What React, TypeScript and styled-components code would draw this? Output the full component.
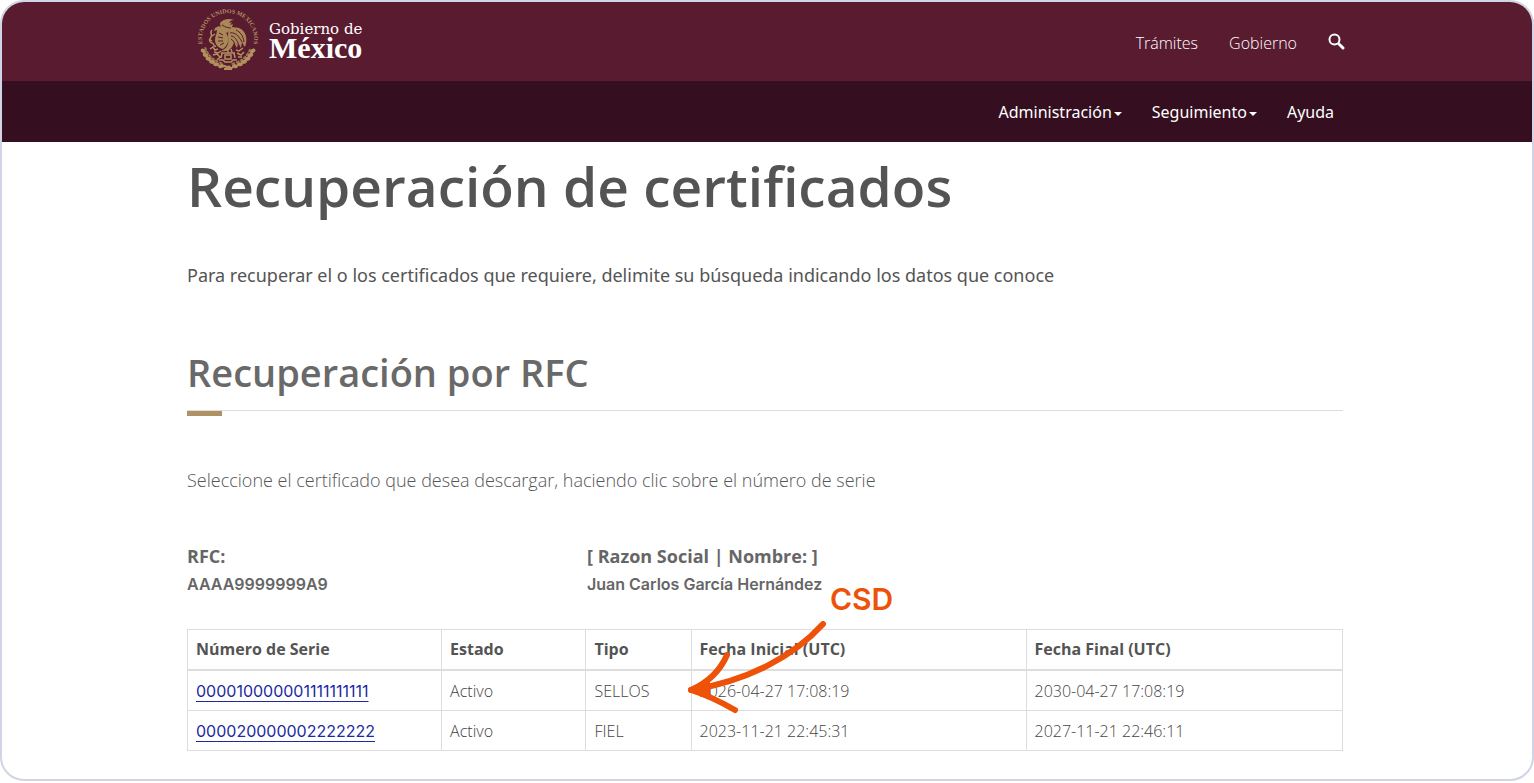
import React from "react";
import styled, { createGlobalStyle } from "styled-components";

const GlobalStyle = createGlobalStyle`
  *, *::before, *::after { box-sizing: border-box; }
  body {
    margin: 0;
    background: #fff;
    color: #545454;
    font-family: "Open Sans", sans-serif;
  }
  h1, h2, p, dl, dt, dd, ul { margin: 0; padding: 0; }
`;

const Frame = styled.div`
  border: 2px solid #d0d4e4;
  border-radius: 24px;
  overflow: hidden;
  background: #fff;
`;

const Bar = styled.div<{ $tone: string }>`
  background: ${(p) => p.$tone};
`;

const Container = styled.div`
  max-width: 1160px;
  margin: 0 auto;
  padding-right: 4px;
`;

const TopRow = styled(Container)`
  display: flex;
  align-items: center;
  justify-content: space-between;
  height: 79px;
  padding-left: 10px;
  padding-right: 2px;
`;

const Brand = styled.a`
  display: flex;
  align-items: center;
  gap: 10px;
  padding-bottom: 4px;
  color: #fff;
  text-decoration: none;
`;

const BrandText = styled.span`
  display: flex;
  flex-direction: column;
`;

const BrandSmall = styled.span`
  font-family: "DejaVu Serif", serif;
  font-size: 15px;
  line-height: 16px;
`;

const BrandLarge = styled.span`
  font-family: "Liberation Serif", serif;
  font-size: 30px;
  font-weight: 700;
  line-height: 22px;
`;

const TopNav = styled.nav`
  display: flex;
  align-items: center;
  gap: 31px;
  padding: 3px 0 0;
`;

const TopLink = styled.a`
  color: #fff;
  font-size: 16px;
  font-weight: 300;
  line-height: 24px;
  text-decoration: none;
`;

const SearchButton = styled.button`
  display: flex;
  padding: 0 0 4px;
  border: 0;
  background: none;
  color: #fff;
`;

const MenuRow = styled(Container)`
  display: flex;
  align-items: center;
  justify-content: flex-end;
  gap: 30px;
  height: 61px;
  padding-right: 13px;
`;

const MenuItem = styled.a`
  display: flex;
  align-items: center;
  gap: 2px;
  color: #fff;
  font-family: "Noto Sans", sans-serif;
  font-size: 16px;
  font-weight: 400;
  line-height: 24px;
  text-decoration: none;
`;

const Caret = styled.span`
  margin-top: 4px;
  border: 4px solid transparent;
  border-top-color: #fff;
  border-bottom: 0;
`;

const Main = styled(Container).attrs({ as: "main" })`
  padding-top: 6px;
  padding-bottom: 28px;
`;

const Title = styled.h1`
  font-size: 55px;
  font-weight: 600;
  line-height: 76px;
`;

const Intro = styled.p`
  margin-top: 37px;
  font-family: "Noto Sans", sans-serif;
  font-size: 18px;
  line-height: 28px;
`;

const SectionTitle = styled.h2`
  margin-top: 55px;
  padding-bottom: 10px;
  color: #696969;
  font-size: 38px;
  font-weight: 600;
  line-height: 56px;
`;

const Rule = styled.div`
  height: 6px;
  border-top: 1px solid #ddd;

  &::before {
    content: "";
    display: block;
    width: 35px;
    height: 5px;
    background: #b09163;
  }
`;

const Hint = styled.p`
  margin-top: 50px;
  color: #555;
  font-size: 18px;
  font-weight: 300;
  line-height: 28px;
`;

const Facts = styled.dl`
  display: flex;
  margin-top: 48px;
  color: #666;
`;

const Fact = styled.div`
  flex: 0 0 400px;
`;

const FactLabel = styled.dt`
  font-size: 18px;
  font-weight: 700;
  line-height: 28px;
`;

const FactValue = styled.dd`
  font-family: Inter, sans-serif;
  font-size: 16px;
  font-weight: 600;
  line-height: 28px;
`;

const Results = styled.div`
  position: relative;
  margin-top: 31px;
`;

const Table = styled.table`
  width: 100%;
  border-collapse: collapse;
  table-layout: fixed;
  font-size: 16px;
  line-height: 24px;
`;

const HeadCell = styled.th<{ $width: string }>`
  width: ${(p) => p.$width};
  padding: 7px 8px 8px;
  border: 1px solid #ddd;
  border-bottom-width: 2px;
  text-align: left;
  font-weight: 700;
`;

const Cell = styled.td`
  padding: 8px 8px 7px;
  border: 1px solid #ddd;
  color: #444;
  font-weight: 300;
`;

const SerialLink = styled.a`
  color: #1c2aa0;
  font-family: Inter, sans-serif;
  font-weight: 400;
  text-underline-offset: 4px;
`;

const Callout = styled.div`
  position: absolute;
  top: -48px;
  left: 500px;
  color: #ee5209;
  pointer-events: none;
`;

const CalloutLabel = styled.span`
  display: block;
  padding-left: 143px;
  font-family: Inter, sans-serif;
  font-size: 30px;
  font-weight: 600;
  line-height: 36px;
`;

const Arrow = styled.svg`
  display: block;
  margin-top: 4px;
`;

const SealLetters = styled.text`
  font-family: "Liberation Serif", serif;
  font-size: 6px;
  font-weight: 700;
`;

const columns = [
  { label: "Número de Serie", width: "22%" },
  { label: "Estado", width: "12.5%" },
  { label: "Tipo", width: "9.1%" },
  { label: "Fecha Inicial (UTC)", width: "29%" },
  { label: "Fecha Final (UTC)", width: "27.4%" },
];

const certificates = [
  ["000010000001111111111", "Activo", "SELLOS", "2026-04-27 17:08:19", "2030-04-27 17:08:19"],
  ["000020000002222222", "Activo", "FIEL", "2023-11-21 22:45:31", "2027-11-21 22:46:11"],
];

const leafAngles = [24, 34, 44, 54, 64, 75, 105, 116, 126, 136, 146, 156];

function Seal() {
  return (
    <svg width="62" height="62" viewBox="0 0 62 62" fill="none" stroke="#b3915f" aria-hidden="true">
      <defs>
        <path id="seal-arc" d="M7 40A26 26 0 1 1 55 40" />
      </defs>
      <SealLetters fill="#b3915f" stroke="none">
        <textPath href="#seal-arc" startOffset="50%" textAnchor="middle">
          ESTADOS UNIDOS MEXICANOS
        </textPath>
      </SealLetters>
      {leafAngles.map((angle) => (
        <g key={angle} transform={`rotate(${angle} 31 31)`}>
          <ellipse cx="58" cy="31" rx="2" ry="3" fill="#b3915f" stroke="none" transform={`rotate(${angle < 90 ? 30 : -30} 58 31)`} />
          <ellipse cx="55" cy="32" rx="1" ry="2" fill="#9c7a50" stroke="none" />
        </g>
      ))}
      <path d="M26 58c2-3 4 2 5 0s3 3 5 0M27 60h8" strokeWidth="2" />
      <g fill="#a98757" stroke="none">
        <path d="M23 14c3-4 9-5 14-3-3 0-4 1-5 3l3-1-2 3 3-1-1 3c3 0 5 2 6 4-5-2-9-1-11 2-3-1-7-4-7-10z" />
        <path d="M32 21c5-4 12-3 15 2 3 4 3 10 1 15-2-2-2-4-3-5l-1 6-3-5-1 5-3-5-2 4c-2 3-6 5-11 4 4-2 6-4 7-7 1-5-1-10 1-14z" />
        <path d="M22 17l-4 2-1 3 3-1c0 4-2 6-2 10s3 8 8 9c4-3 6-7 5-12-1-4-5-9-9-11z" />
      </g>
      <path d="M33 24c3-1 8 1 12 9M34 27c3 0 6 3 8 10M34 30c2 1 3 3 4 6M39 21c4 2 7 5 8 12M25 16c3 2 6 3 9 3M22 24l4 2M21 28l5 1M21 32l5 0M23 36l4-2" stroke="#591b30" strokeWidth="1" />
      <path d="M15 21c-3 3 1 4-1 7s-2 5 1 6 1 4 4 3M12 30l3 2M18 25l-3 2M13 40l3-2 2 3 3-1M39 41l3 1 4-3" strokeWidth="1.5" />
      <path d="M17 43l4 1 3-2M16 46l4-1 3 3-3 3M24 44h14M25 44l-1 5M28 46h6v4h-6zM37 44l1 5M22 51l4 0 2 2h6l2-2h4M40 44l4 2 3-3M41 48l4 0M31 40v4M34 40l1 3" strokeWidth="1.5" />
    </svg>
  );
}

export default function App() {
  return (
    <>
      <GlobalStyle />
      <Frame>
        <header>
          <Bar $tone="#591b30">
            <TopRow>
              <Brand href="#inicio">
                <Seal />
                <BrandText>
                  <BrandSmall>Gobierno de</BrandSmall>
                  <BrandLarge>México</BrandLarge>
                </BrandText>
              </Brand>
              <TopNav aria-label="Principal">
                <TopLink href="#tramites">Trámites</TopLink>
                <TopLink href="#gobierno">Gobierno</TopLink>
                <SearchButton type="button" aria-label="Buscar">
                  <svg width="17" height="17" viewBox="0 0 17 17" fill="none" stroke="currentColor" aria-hidden="true">
                    <circle cx="6.5" cy="6.5" r="5" strokeWidth="2" />
                    <path d="M10 10l1 1" strokeWidth="2" />
                    <path d="M11.5 11.5l3.5 3.5" strokeWidth="3" strokeLinecap="round" />
                  </svg>
                </SearchButton>
              </TopNav>
            </TopRow>
          </Bar>
          <Bar $tone="#350f1f">
            <MenuRow as="nav" aria-label="Certificados">
              <MenuItem href="#administracion">
                Administración
                <Caret />
              </MenuItem>
              <MenuItem href="#seguimiento">
                Seguimiento
                <Caret />
              </MenuItem>
              <MenuItem href="#ayuda">Ayuda</MenuItem>
            </MenuRow>
          </Bar>
        </header>
        <Main>
          <Title>Recuperación de certificados</Title>
          <Intro>
            Para recuperar el o los certificados que requiere, delimite su búsqueda indicando los datos que conoce
          </Intro>
          <SectionTitle>Recuperación por RFC</SectionTitle>
          <Rule />
          <Hint>Seleccione el certificado que desea descargar, haciendo clic sobre el número de serie</Hint>
          <Facts>
            <Fact>
              <FactLabel>RFC:</FactLabel>
              <FactValue>AAAA9999999A9</FactValue>
            </Fact>
            <Fact>
              <FactLabel>[ Razon Social | Nombre: ]</FactLabel>
              <FactValue>Juan Carlos García Hernández</FactValue>
            </Fact>
          </Facts>
          <Results>
            <Table>
              <thead>
                <tr>
                  {columns.map((column) => (
                    <HeadCell key={column.label} $width={column.width} scope="col">
                      {column.label}
                    </HeadCell>
                  ))}
                </tr>
              </thead>
              <tbody>
                {certificates.map(([serial, ...values]) => (
                  <tr key={serial}>
                    <Cell>
                      <SerialLink href={`#${serial}`}>{serial}</SerialLink>
                    </Cell>
                    {values.map((value) => (
                      <Cell key={value}>{value}</Cell>
                    ))}
                  </tr>
                ))}
              </tbody>
            </Table>
            <Callout>
              <CalloutLabel>CSD</CalloutLabel>
              <Arrow width="142" height="94" viewBox="0 0 142 94" fill="none" stroke="currentColor" strokeWidth="6" strokeLinecap="round" strokeLinejoin="round" aria-hidden="true">
                <path d="M136 3C107 35 61 60 4 69" />
                <path d="M40 34C33 50 20 62 4 69C20 74 34 81 48 89" />
                <path d="M4 69L22 59V74Z" fill="currentColor" strokeWidth="2" />
              </Arrow>
            </Callout>
          </Results>
        </Main>
      </Frame>
    </>
  );
}
